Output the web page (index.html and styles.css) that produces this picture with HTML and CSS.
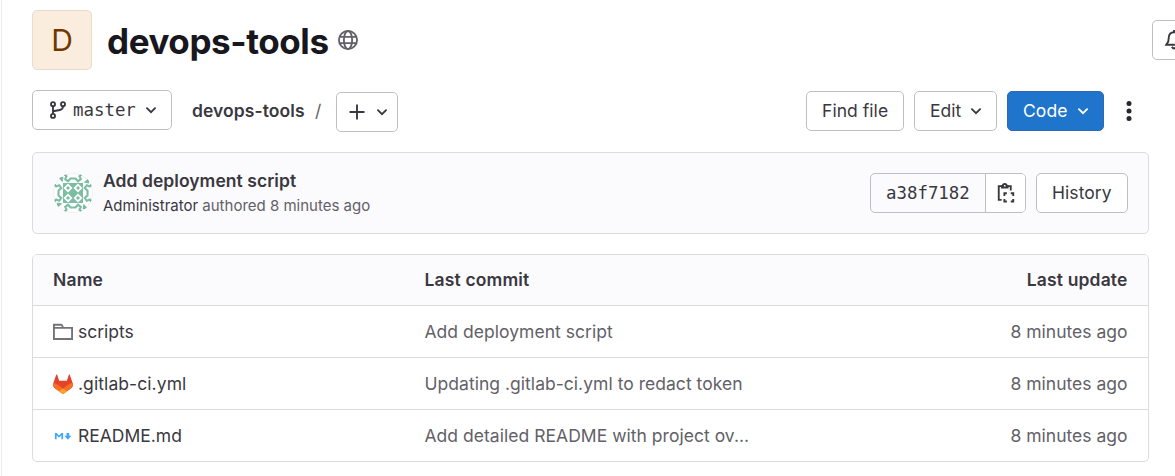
FILE: index.html
```html
<!DOCTYPE html>
<html lang="en">
<head>
<meta charset="utf-8">
<title>devops-tools</title>
<link rel="stylesheet" href="styles.css">
</head>
<body>
<svg class="defs" aria-hidden="true">
  <symbol id="chevron" viewBox="0 0 16 16"><path d="M4.750 6.500 8 9.750l3.250-3.250" fill="none" stroke="currentColor" stroke-width="1.500" stroke-linecap="round"/></symbol>
</svg>
<main class="page">
  <header class="project">
    <div class="avatar">D</div>
    <h1 class="title">devops-tools</h1>
    <svg class="globe" viewBox="0 0 16 16" fill="none" stroke="currentColor" stroke-width="1.5"><circle cx="8" cy="8" r="7.25"/><ellipse cx="8" cy="8" rx="3.3" ry="7.25"/><path d="M1.3 5.5h13.4M1.3 10.5h13.4"/></svg>
    <button class="btn bell"><svg class="icon" viewBox="0 0 16 16" fill="none" stroke="currentColor" stroke-width="1.5"><path d="M8 1.8C5.4 1.8 4 3.6 3.8 6L3.4 9.3 1.8 11.8h12.4l-1.6-2.5L12.2 6C12 3.6 10.600 1.8 8 1.8zM8 0v2M6.300 13.500Q8 16 9.700 13.500"/></svg></button>
  </header>
  <nav class="toolbar">
    <button class="btn branch"><svg class="icon branch-icon" viewBox="0 0 16 16" fill="none" stroke="currentColor" stroke-width="1.5"><circle cx="4" cy="3.300" r="1.600"/><circle cx="12" cy="3.300" r="1.600"/><circle cx="4" cy="12.700" r="1.600"/><path d="M4 5v6M4 9 9.500 8Q12 7.500 12 5"/></svg><span class="mono">master</span><svg class="icon chevron"><use href="#chevron"/></svg></button>
    <div class="crumb"><b>devops-tools</b><span class="slash">/</span></div>
    <button class="btn add"><svg class="icon" viewBox="0 0 16 16" stroke="currentColor" stroke-width="1.5"><path d="M8 2v12M2 8h12"/></svg><svg class="icon chevron"><use href="#chevron"/></svg></button>
    <div class="actions">
      <button class="btn find">Find file</button>
      <button class="btn edit">Edit<svg class="icon chevron"><use href="#chevron"/></svg></button>
      <button class="btn code">Code<svg class="icon chevron"><use href="#chevron"/></svg></button>
      <svg class="icon kebab" viewBox="0 0 16 16" fill="currentColor"><circle cx="8" cy="2" r="2"/><circle cx="8" cy="8" r="2"/><circle cx="8" cy="14" r="2"/></svg>
    </div>
  </nav>
  <section class="commit">
    <svg class="identicon" viewBox="0 0 40 40">
      <circle cx="20" cy="20" r="20" fill="#fff"/>
      <path d="M10 10h20v20H10z" fill="#7dbda4"/>
      <path d="m15 10.500 4.500 4.500-4.500 4.500-4.500-4.500zM25 10.500l4.500 4.500-4.500 4.500-4.500-4.500zM15 20.500l4.500 4.500-4.500 4.500-4.500-4.500zM25 20.500l4.500 4.500-4.500 4.500-4.500-4.500z" fill="#fff"/>
      <path d="m15 13 2 2-2 2-2-2zM25 13l2 2-2 2-2-2zM15 23l2 2-2 2-2-2zM25 23l2 2-2 2-2-2z" fill="#7dbda4"/>
      <g id="edge"><path d="m11.500 1.500 2 1.700-1.300 3L15 8.300l2.500-2.800h5L25 8.300l2.800-2.100-1.300-3 2-1.700" fill="none" stroke="#7dbda4" stroke-width="2.100"/><path d="M5 4h5.500l-1 5.500z" fill="#7dbda4"/></g>
      <use href="#edge" transform="rotate(90 20 20)"/><use href="#edge" transform="rotate(180 20 20)"/><use href="#edge" transform="rotate(270 20 20)"/>
      <circle cx="20" cy="20" r="19.500" fill="none" stroke="#28272d" stroke-opacity=".08"/>
    </svg>
    <div class="message"><b>Add deployment script</b><p><span class="author">Administrator</span> authored 8 minutes ago</p></div>
    <div class="sha"><span class="mono hash">a38f7182</span><span class="copy"><svg class="icon" viewBox="0 0 16 16" fill="none" stroke="currentColor" stroke-width="1.500"><path d="M4.500 2.500H2.200v11h2.300M9.500 2.500h2.300V6M4.700 3.600V2.300h.8a1.500 1.500 0 0 1 3 0h.8v1.300z"/><path d="M6.700 10.300V8.200h2M11.800 8.200h2v2.100M13.800 12.700v2.100h-2M8.700 14.800h-2v-2.100"/></svg></span></div>
    <button class="btn history">History</button>
  </section>
  <section class="files">
    <div class="row head"><span>Name</span><span>Last commit</span><span class="time">Last update</span></div>
    <div class="row"><span class="file"><svg class="icon folder" viewBox="0 0 16 16" fill="none" stroke="currentColor" stroke-width="1.500"><path d="M.75 4.700V2.200h5.700q.7 0 1 .8l.7 1.700H.75v8.900h14.500V4.700H7.500"/></svg>scripts</span><span class="last">Add deployment script</span><span class="time">8 minutes ago</span></div>
    <div class="row"><span class="file yml"><svg class="icon" viewBox="0 0 16 16"><path d="M.3 7.200 2.500.7c.2-.5.700-.5.900 0l1.500 4.600h6.200L12.600.7c.2-.5.700-.5.900 0l2.200 6.500c.6 1.800 0 3.300-1.400 4.300L8 16l-6.300-4.500C.3 10.500-.3 9 .3 7.200z" fill="#e24329"/><path d="M.3 7q2.300.5 4.400 2.200L11.400 14 8 16l-6.300-4.500C.3 10.500-.2 9 .3 7zM15.700 7q-2.300.5-4.400 2.200L4.600 14 8 16l6.300-4.500C15.700 10.500 16.200 9 15.700 7z" fill="#fc6d26"/><path d="m8 11.500 3.400 2.300L8 16l-3.400-2.200z" fill="#fca326"/></svg>.gitlab-ci.yml</span><span class="last">Updating .gitlab-ci.yml to redact token</span><span class="time">8 minutes ago</span></div>
    <div class="row"><span class="file"><svg class="icon" viewBox="0 0 16 16" fill="#42a5f5"><path d="M1.500 10.500v-5h1.400l1.900 2 1.900-2h1.400v5H6.700V7.400L4.800 9.300 2.900 7.400v3.100zM10.800 5.500h2.200v2.300h1.700L11.900 11 9.100 7.800h1.700z"/></svg>README.md</span><span class="last">Add detailed README with project ov...</span><span class="time">8 minutes ago</span></div>
  </section>
</main>
</body>
</html>
```
FILE: styles.css
```css
* { box-sizing: border-box; }
body { margin: 0; background: #fff; color: #3a383f; font: 17.5px/25px Inter, sans-serif; overflow: hidden; }
.defs { display: none; }
.page { height: 476px; margin-left: 1px; padding: 10px 0 0 30px; border-left: 1px solid #ececef; }
.icon { width: 20px; height: 20px; flex: none; display: block; }
.mono { font-family: "DejaVu Sans Mono", monospace; font-size: 17.4px; }
.project { display: flex; height: 60px; align-items: center; }
.project > * { flex-shrink: 0; }
.avatar { width: 60px; height: 60px; display: grid; place-items: center; border: 1px solid #e8dccd; border-radius: 5px; background: #faeddd; color: #703800; font-size: 30px; line-height: 40px; }
.title { margin: 2px 0 0 15px; width: 221px; color: #18171d; font-size: 35px; line-height: 45px; font-weight: 650; letter-spacing: -.42px; white-space: nowrap; }
.globe { width: 20px; height: 20px; margin-left: 10px; color: #626168; }
.btn { display: flex; align-items: center; flex: none; height: 40px; margin: 0; padding: 0 15px; border: 1px solid #bfbfc3; border-radius: 5px; background: #fff; color: #3a383f; font: inherit; white-space: nowrap; }
.bell { width: 60px; margin-left: 794px; padding-left: 11px; }
.toolbar { display: flex; height: 42px; margin: 20px 26px 0 0; }
.branch { width: 140px; }
.branch .mono { padding-top: 1px; }
.branch-icon { margin-right: 5px; }
.branch .chevron { margin-left: 5px; }
.crumb { display: flex; width: 144px; margin: 8px 0 0 20px; }
.crumb b { width: 113px; font-weight: 600; letter-spacing: .07px; }
.slash { margin-left: 10px; color: #626168; }
.add { width: 62px; margin-top: 2px; padding: 0 10px; gap: 5px; }
.actions { display: flex; gap: 10px; margin: 1px 10px 0 auto; }
.find { width: 98px; }
.find, .edit, .code, .history { padding-bottom: 1px; letter-spacing: .05px; }
.edit { width: 83px; justify-content: space-between; padding-right: 10px; }
.code { width: 97px; justify-content: space-between; padding-right: 10px; background: #1f75cb; border-color: #2f68b4; color: #fff; }
.kebab { margin: 10px 0 0 5px; color: #28272d; }
.commit { display: flex; width: 1117px; height: 82px; margin-top: 20px; padding: 20px; border: 1px solid #dcdcde; border-radius: 5px; background: #fbfafd; }
.identicon { width: 40px; height: 40px; border-radius: 50%; }
.message { margin: -5px 0 0 10px; }
.message b { font-weight: 600; letter-spacing: .05px; }
.message p { margin: 1px 0 0; color: #626168; font-size: 15px; line-height: 23px; }
.author { color: #3a383f; }
.sha { display: flex; width: 156px; height: 40px; margin-left: auto; border: 1px solid #bfbfc3; border-radius: 5px; overflow: hidden; }
.hash { width: 115px; padding: 7px 0 0 15px; border-right: 1px solid #bfbfc3; }
.copy { display: grid; place-items: center; flex: 1; background: #fff; }
.history { width: 92px; margin-left: 10px; }
.files { width: 1117px; height: 208px; margin-top: 20px; border: 1px solid #dcdcde; border-radius: 5px; overflow: hidden; }
.row { display: grid; grid-template-columns: 371.500px 1fr 200px; height: 52px; padding: 0 20.500px 0 20px; align-items: center; border-top: 1px solid #dcdcde; }
.head { height: 50px; padding-bottom: 1px; border: 0; background: #fbfafd; font-weight: 600; letter-spacing: .15px; }
.file { display: flex; align-items: center; gap: 5px; }
.yml { letter-spacing: .08px; }
.folder { color: #737278; }
.last, .time { color: #626168; white-space: nowrap; }
.last { letter-spacing: .03px; }
.time { text-align: right; }
.head .time { color: inherit; }
```
